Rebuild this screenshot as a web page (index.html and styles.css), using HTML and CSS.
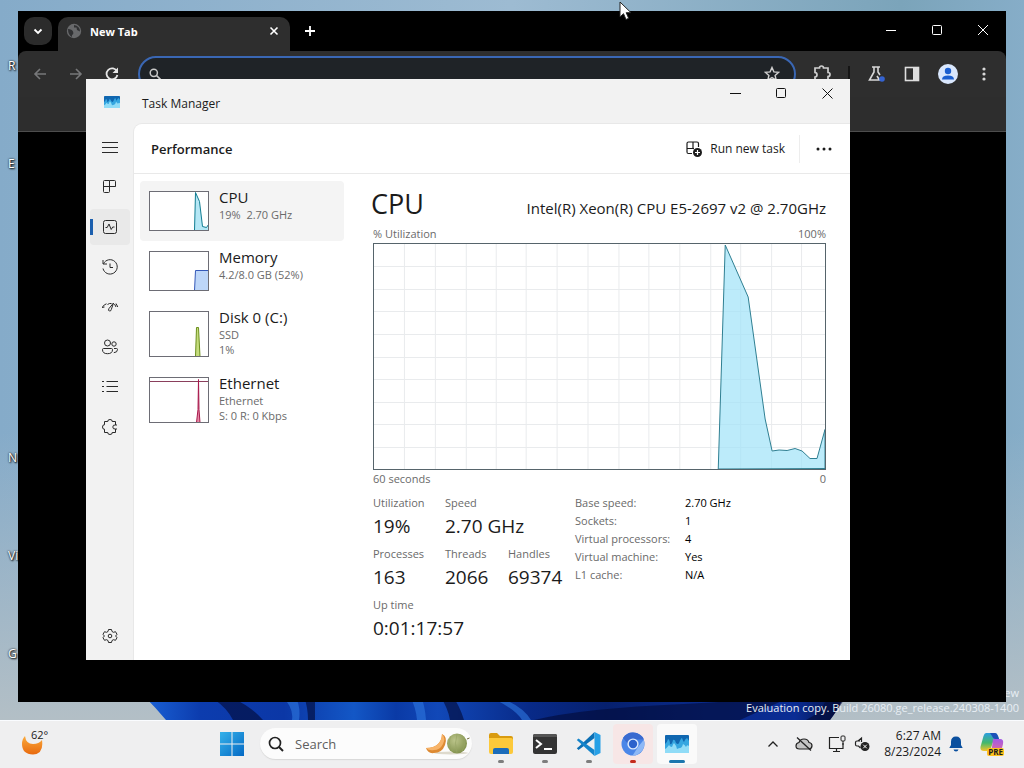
FILE: index.html
```html
<!DOCTYPE html>
<html lang="en">
<head>
    <meta charset="UTF-8">
    <meta name="viewport" content="width=device-width, initial-scale=1.0">
    <title>Desktop - Task Manager</title>
    <link rel="stylesheet" href="styles.css">
</head>
<body>
    <main class="desktop">
        <svg class="wallpaper" viewBox="0 0 1024 24" preserveAspectRatio="none" aria-hidden="true">
            <defs>
                <linearGradient id="bloom" x1="0" x2="1" y1="0" y2="0">
                    <stop offset="0" stop-color="#1a62d6"/>
                    <stop offset=".08" stop-color="#0c3cae"/>
                    <stop offset=".2" stop-color="#0b37a6"/>
                    <stop offset=".3" stop-color="#1357c6"/>
                    <stop offset=".36" stop-color="#0a3aa6"/>
                    <stop offset=".42" stop-color="#1148b8"/>
                    <stop offset=".55" stop-color="#082a88"/>
                    <stop offset=".66" stop-color="#06206e"/>
                    <stop offset=".8" stop-color="#0a2b8c"/>
                    <stop offset=".93" stop-color="#0a2c94"/>
                    <stop offset="1" stop-color="#040f3c"/>
                </linearGradient>
            </defs>
            <path d="M144 0H844Q838 14 830 24H166Q156 12 144 0z" fill="url(#bloom)"/>
            <path d="M282 0q12 12 10 24h7q2-14-4-24zM410 0q6 12 7 24h9q-1-14-5-24zM496 4q20 10 26 20h9Q524 12 506 4z" fill="#2f78e0" opacity=".6"/>
            <path d="M215 4q12 8 18 20h30Q250 10 236 4zM304 0q4 12 4 24h7V0zM440 0q8 12 10 24h14q-5-16-12-24zM534 24q50-12 150-16 60-4 100-4L740 24zM806 24q16-8 20-20h18L830 24z" fill="#030d3c" opacity=".65"/>
        </svg>

        <ul class="shortcuts">
            <li>R</li>
            <li>E</li>
            <li></li>
            <li></li>
            <li>N</li>
            <li>Vis</li>
            <li>G</li>
        </ul>

        <p class="watermark">ew<br>Evaluation copy. Build 26080.ge_release.240308-1400</p>

        <section class="browser" aria-label="Browser">
            <div class="tab-strip">
                <button class="tab-search" aria-label="Search tabs">
                    <svg width="12" height="12" viewBox="0 0 12 12"><path d="M2.5 4.5L6 8l3.500-3.500" fill="none" stroke="#fff" stroke-width="1.800"/></svg>
                </button>
                <div class="tab">
                    <svg width="16" height="16" viewBox="0 0 16 16"><circle cx="8" cy="8" r="7.200" fill="#68696b"/><path d="M2 6q4 0 5 2.500t-1 3.500v2Q2 12 2 6zM8 2v2.500h2.500L11 7l3 1.500Q14 3 8 2z" fill="#303133"/></svg>
                    <span class="tab-title">New Tab</span>
                    <button class="tab-close" aria-label="Close tab">
                        <svg width="10" height="10" viewBox="0 0 10 10"><path d="M1.500 1.500l7 7M8.500 1.500l-7 7" stroke="#fff" stroke-width="1.600"/></svg>
                    </button>
                </div>
                <button class="new-tab" aria-label="New tab">
                    <svg width="12" height="12" viewBox="0 0 12 12"><path d="M6 1v10M1 6h10" stroke="#fff" stroke-width="1.800"/></svg>
                </button>
                <div class="caption-buttons">
                    <button aria-label="Minimize"><svg width="10" height="10" viewBox="0 0 10 10"><path d="M0 5.500h10" stroke="#fff"/></svg></button>
                    <button aria-label="Maximize"><svg width="10" height="10" viewBox="0 0 10 10"><rect x=".5" y=".5" width="9" height="9" rx="1" fill="none" stroke="#fff"/></svg></button>
                    <button aria-label="Close"><svg width="10" height="10" viewBox="0 0 10 10"><path d="M0 0l10 10M10 0L0 10" stroke="#fff"/></svg></button>
                </div>
            </div>
            <div class="toolbar">
                <button aria-label="Back"><svg width="16" height="16" viewBox="0 0 16 16"><path d="M14 8H3M8 3L3 8l5 5" fill="none" stroke="#77787a" stroke-width="1.600"/></svg></button>
                <button aria-label="Forward"><svg width="16" height="16" viewBox="0 0 16 16"><path d="M2 8h11M8 3l5 5-5 5" fill="none" stroke="#77787a" stroke-width="1.600"/></svg></button>
                <button aria-label="Reload"><svg width="16" height="16" viewBox="0 0 16 16"><path d="M13 5.500A5.500 5.500 0 1 0 13.400 9" fill="none" stroke="#e6e6e6" stroke-width="1.800"/><path d="M14 1.500V7H8.500z" fill="#e6e6e6"/></svg></button>
                <div class="omnibox">
                    <svg width="12" height="12" viewBox="0 0 12 12"><circle cx="4.800" cy="4.800" r="3.600" fill="none" stroke="#c8c8c8" stroke-width="1.500"/><path d="M7.500 7.500l4 4" stroke="#c8c8c8" stroke-width="1.700"/></svg>
                    <input type="text" aria-label="Address and search bar">
                    <button aria-label="Bookmark this tab"><svg width="16" height="16" viewBox="0 0 16 16"><path d="M8 1.500l1.900 4.400 4.800.4-3.600 3.100 1.100 4.700L8 11.600l-4.200 2.500 1.100-4.700L1.300 6.300l4.800-.4z" fill="none" stroke="#d0d0d0" stroke-width="1.400"/></svg></button>
                </div>
                <button aria-label="Extensions"><svg width="18" height="18" viewBox="0 0 18 18"><path d="M2 3h4.500q0-2 2-2t2 2H15v4.500q2 0 2 2t-2 2V16H2v-4q2 0 2-2.200T2 7.500z" fill="none" stroke="#d0d0d0" stroke-width="1.700"/></svg></button>
                <span class="toolbar-divider"></span>
                <button aria-label="Labs"><svg width="18" height="18" viewBox="0 0 18 18"><path d="M5 2h8M7 2v5L2.500 15h10L10 11M11 2v5l2 3" fill="none" stroke="#d8d8d8" stroke-width="1.600"/><circle cx="15" cy="14" r="2.800" fill="#3563d0"/></svg></button>
                <button aria-label="Side panel"><svg width="16" height="16" viewBox="0 0 16 16"><rect x="1.500" y="1.500" width="13" height="13" fill="none" stroke="#dedede" stroke-width="1.600"/><path d="M9 1h6v14H9z" fill="#dedede"/></svg></button>
                <button aria-label="Profile"><svg width="20" height="20" viewBox="0 0 20 20"><circle cx="10" cy="10" r="10" fill="#d9e7fd"/><circle cx="10" cy="7" r="3.200" fill="#1b5fd0"/><path d="M4 15.500q0-4 6-4t6 4z" fill="#1b5fd0"/></svg></button>
                <button aria-label="Menu"><svg width="16" height="16" viewBox="0 0 16 16" fill="#d8d8d8"><circle cx="8" cy="3" r="1.600"/><circle cx="8" cy="8" r="1.600"/><circle cx="8" cy="13" r="1.600"/></svg></button>
            </div>
            <div class="bookmarks"></div>
        </section>

        <section class="task-manager" aria-label="Task Manager">
            <header class="titlebar">
                <svg class="app-icon" width="16" height="12" viewBox="0 0 24 18"><use href="#tm-icon"/></svg>
                <span class="app-title">Task Manager</span>
                <div class="caption-buttons">
                    <button aria-label="Minimize"><svg width="11" height="11" viewBox="0 0 11 11"><path d="M0 5.500h11" stroke="#111"/></svg></button>
                    <button aria-label="Maximize"><svg width="11" height="11" viewBox="0 0 11 11"><rect x=".5" y=".5" width="9" height="9" rx="1" fill="none" stroke="#111"/></svg></button>
                    <button aria-label="Close"><svg width="11" height="11" viewBox="0 0 11 11"><path d="M.5.5l10 10M10.500.5l-10 10" stroke="#111"/></svg></button>
                </div>
            </header>

            <nav class="rail" aria-label="Pages">
                <button aria-label="Navigation"><svg width="16" height="16" viewBox="0 0 16 16"><path d="M0 3.500h16M0 8.500h16M0 13.500h16"/></svg></button>
                <button aria-label="Processes"><svg width="16" height="16" viewBox="0 0 16 16"><path d="M7.500 1.500h-5q-1 0-1 1v10q0 1 1 1h4q1 0 1-1zM1.500 7.500h12v-5q0-1-1-1h-5M13.500 6.500q0 1-1 1"/></svg></button>
                <button class="current" aria-label="Performance" aria-current="page"><svg width="16" height="16" viewBox="0 0 16 16"><rect x="1.500" y="1.500" width="13" height="13" rx="2"/><path d="M3.500 8.500h1.700L7 5l2.200 5.500L10.700 8h1.800"/></svg></button>
                <button aria-label="App history"><svg width="18" height="18" viewBox="0 0 18 18"><path d="M2 2v4h4M2.500 5.800A7.200 7.200 0 1 1 2 10.500M9 5.500v4h3"/></svg></button>
                <button aria-label="Startup apps"><svg width="18" height="18" viewBox="0 0 18 18"><path d="M1.500 9Q3 6.500 5.500 5.800M1 9.500L3.500 9M6.500 6.500q2-1.500 4-1M12.500 5L8 10.500q-1.200 2 .3 2.500t2-1.500zM13.500 6l1.500 3M15 5.500L16.800 9"/></svg></button>
                <button aria-label="Users"><svg width="18" height="18" viewBox="0 0 18 18"><circle cx="6.500" cy="5" r="3"/><circle cx="13" cy="6" r="2.200"/><path d="M2.500 10.500h8q1 0 1 1.200 0 4-5 4t-5-4q0-1.200 1-1.200zM13 10.500h2.500q1 0 1 1 0 3-3.700 3.200"/></svg></button>
                <button aria-label="Details"><svg width="16" height="16" viewBox="0 0 16 16"><path d="M4.500 2.500H16M4.500 7.500H16M4.500 12.500H16M0 2.500h2M0 7.500h2M0 12.500h2"/></svg></button>
                <button aria-label="Services"><svg width="18" height="18" viewBox="0 0 18 18"><path d="M3.500 3.500h3.300q-.3-2 2.200-2t2.200 2h3.300v3.500q-2.700-.4-2.700 2t2.700 2v3.500h-3.300q.3 2-2.200 2t-2.200-2H3.500v-3.300q-2 .3-2-2.200t2-2.200zM14.500 7h1.500M14.500 11h1.500"/></svg></button>
                <button class="settings" aria-label="Settings"><svg width="16" height="16" viewBox="0 0 16 16"><path d="M6.500 1.500h3l.5 2 1.500.8 2-.6 1.500 2.600L13.600 8l1.400 1.700-1.500 2.600-2-.6-1.500.8-.5 2h-3l-.5-2-1.500-.8-2 .6L1 9.700 2.400 8 1 6.300l1.500-2.600 2 .6L6 3.500z"/><circle cx="8" cy="8" r="1.800"/></svg></button>
            </nav>

            <div class="page">
                <header class="page-header">
                    <h1>Performance</h1>
                    <button class="run-task">
                        <svg width="16" height="16" viewBox="0 0 16 16"><path d="M6 12.500H2.500q-1.500 0-1.500-1.500V2.500Q1 1 2.500 1H11q1.500 0 1.500 1.500V6M7 1v7M1 7.500h7" fill="none" stroke="#1b1b1b" stroke-width="1.200"/><circle cx="11.500" cy="11.500" r="4.500" fill="#1b1b1b"/><path d="M11.500 9v5M9 11.500h5" stroke="#fff" stroke-width="1.200"/></svg>
                        <span>Run new task</span>
                    </button>
                    <button class="more" aria-label="See more">
                        <svg width="16" height="4" viewBox="0 0 16 4" fill="#1b1b1b"><circle cx="2" cy="2" r="1.500"/><circle cx="8" cy="2" r="1.500"/><circle cx="14" cy="2" r="1.500"/></svg>
                    </button>
                </header>

                <div class="page-body">
                    <ul class="resources">
                        <li class="resource selected">
                            <svg class="thumb" width="60" height="40" viewBox="0 0 60 40"><path d="M45.500 39.500l1-38 4 9 3 25 4 1 2-3v6z" fill="#b5e7f5" stroke="#117d92"/></svg>
                            <div><h3>CPU</h3><p>19%&nbsp; 2.70 GHz</p></div>
                        </li>
                        <li class="resource">
                            <svg class="thumb" width="60" height="40" viewBox="0 0 60 40"><path d="M45.500 39.500l1-20h13v20z" fill="#bdd6f8" stroke="#3559b8"/></svg>
                            <div><h3>Memory</h3><p>4.2/8.0 GB (52%)</p></div>
                        </li>
                        <li class="resource">
                            <svg class="thumb" width="60" height="46" viewBox="0 0 60 46"><path d="M46.500 45.500l1-29h2l1.500 29z" fill="#c5dc7d" stroke="#6b8f1c"/></svg>
                            <div><h3>Disk 0 (C:)</h3><p>SSD</p><p>1%</p></div>
                        </li>
                        <li class="resource">
                            <svg class="thumb" width="60" height="46" viewBox="0 0 60 46"><path d="M0 4.500h60" stroke="#8a3f5c"/><path d="M47.500 45.500l1.500-13 .5-30 .5 30 1 13z" fill="#e58aa5" stroke="#a8184c"/></svg>
                            <div><h3>Ethernet</h3><p>Ethernet</p><p>S: 0 R: 0 Kbps</p></div>
                        </li>
                    </ul>

                    <section class="detail">
                        <div class="detail-title">
                            <h2>CPU</h2>
                            <p>Intel(R) Xeon(R) CPU E5-2697 v2 @ 2.70GHz</p>
                        </div>
                        <div class="axis"><span>% Utilization</span><span>100%</span></div>
                        <div class="graph">
                            <svg viewBox="0 0 452 225" preserveAspectRatio="none" role="img" aria-label="CPU utilization over 60 seconds">
                                <path class="grid-lines" d="M30.500 0v225M61.500 0v225M92.500 0v225M122.500 0v225M152.500 0v225M183.500 0v225M214.500 0v225M245.500 0v225M275.500 0v225M306.500 0v225M337.500 0v225M367.500 0v225M398.500 0v225M428.500 0v225M0 22.500h452M0 45.500h452M0 67.500h452M0 90.500h452M0 113.500h452M0 135.500h452M0 158.500h452M0 180.500h452M0 203.500h452"/>
                                <path class="usage" d="M345 225L352 1l23 52 17 122 7 32 7-1 8 .5 8-2 7 2.500 8 7.500h7l8-29v39z"/>
                            </svg>
                        </div>
                        <div class="axis"><span>60 seconds</span><span>0</span></div>

                        <div class="stats">
                            <div class="figures">
                                <dl>
                                    <div><dt>Utilization</dt><dd>19%</dd></div>
                                    <div><dt>Speed</dt><dd>2.70 GHz</dd></div>
                                </dl>
                                <dl>
                                    <div><dt>Processes</dt><dd>163</dd></div>
                                    <div><dt>Threads</dt><dd>2066</dd></div>
                                    <div><dt>Handles</dt><dd>69374</dd></div>
                                </dl>
                                <dl>
                                    <div><dt>Up time</dt><dd>0:01:17:57</dd></div>
                                </dl>
                            </div>
                            <table class="facts">
                                <tr><th scope="row">Base speed:</th><td>2.70 GHz</td></tr>
                                <tr><th scope="row">Sockets:</th><td>1</td></tr>
                                <tr><th scope="row">Virtual processors:</th><td>4</td></tr>
                                <tr><th scope="row">Virtual machine:</th><td>Yes</td></tr>
                                <tr><th scope="row">L1 cache:</th><td>N/A</td></tr>
                            </table>
                        </div>
                    </section>
                </div>
            </div>
        </section>

        <svg class="pointer" width="13" height="20" viewBox="0 0 13 20"><path d="M1 1v15l3.500-3.300L7 18.500l2.700-1.200L7.200 11.700H12z" fill="#fff" stroke="#222"/></svg>
    </main>

    <footer class="taskbar">
        <button class="weather">
            <svg width="22" height="22" viewBox="0 0 22 22">
                <defs><linearGradient id="moon" x1="0" x2="0" y1="0" y2="1"><stop offset="0" stop-color="#fbab3c"/><stop offset="1" stop-color="#e8690e"/></linearGradient></defs>
                <path d="M4 3q1 8 8 8 6 0 9-4 2 14-9 14.500Q1 21 1 11q0-5 3-8z" fill="url(#moon)"/>
            </svg>
            <span>62°</span>
        </button>

        <div class="apps">
            <button class="app" aria-label="Start">
                <svg width="24" height="24" viewBox="0 0 24 24">
                    <defs><linearGradient id="win" x1="0" x2="1" y1="0" y2="1"><stop offset="0" stop-color="#35b2ea"/><stop offset="1" stop-color="#0569c4"/></linearGradient></defs>
                    <path d="M0 0h11.500v11.500H0zM12.500 0H24v11.500H12.500zM0 12.500h11.500V24H0zM12.500 12.500H24V24H12.500z" fill="url(#win)"/>
                </svg>
            </button>
            <label class="search">
                <svg width="16" height="16" viewBox="0 0 16 16"><circle cx="7" cy="7" r="5.500" fill="none" stroke="#222" stroke-width="1.700"/><path d="M11 11l4 4" stroke="#222" stroke-width="2"/></svg>
                <input type="text" placeholder="Search" aria-label="Search">
                <svg width="44" height="22" viewBox="0 0 44 22">
                    <defs><radialGradient id="melon" cx=".4" cy=".35" r=".7"><stop offset="0" stop-color="#bcc58b"/><stop offset="1" stop-color="#7f8f4b"/></radialGradient></defs>
                    <ellipse cx="25" cy="20" rx="17" ry="1.500" fill="#dedacd"/>
                    <circle cx="31" cy="10.500" r="10" fill="url(#melon)"/>
                    <path d="M25 3q-4 8 2 15M31 1q-3 9 0 19M36 2q5 8 0 16" fill="none" stroke="#98a566" stroke-width=".7"/>
                    <path d="M41 6l2.500-1" stroke="#6f6a3c"/>
                    <path d="M16 1q6 3 3 11t-11 8q-6 1-8-5 8 0 12-4t4-10z" fill="#dd8a33"/>
                    <path d="M16 1q4 4 1 10t-9 6q-5 1-8-2 9 0 13-5 3-4 3-9z" fill="#f8b469"/>
                </svg>
            </label>
            <button class="app running" aria-label="File Explorer">
                <svg width="26" height="24" viewBox="0 0 26 24"><path d="M1 3q0-2 2-2h6l3 3h11q2 0 2 2v4H1z" fill="#d99b10"/><path d="M1 6h22q2 0 2 2v12q0 2-2 2H3q-2 0-2-2z" fill="#fcc93b"/><path d="M5 22v-4q0-2 2-2h12q2 0 2 2v4z" fill="#1b6cba"/></svg>
            </button>
            <button class="app running" aria-label="Terminal">
                <svg width="26" height="22" viewBox="0 0 26 22"><rect x="1" y="1" width="24" height="20" rx="2" fill="#343434"/><path d="M1 4V3q0-2 2-2h20q2 0 2 2v1z" fill="#555"/><path d="M4 7l5 4-5 4" fill="none" stroke="#fff" stroke-width="2"/><path d="M12 16h8" stroke="#fff" stroke-width="2"/></svg>
            </button>
            <button class="app running" aria-label="Visual Studio Code">
                <svg width="26" height="26" viewBox="0 0 26 26"><path d="M18.500 1L3 15.500.8 17.300 2.500 19 18.500 7z" fill="#0b6fb4"/><path d="M2.500 7.500L.8 9 3 11l15.500 14v-6z" fill="#1484cb"/><path d="M18.500 1l6 3v18l-6 3z" fill="#27a0e6"/></svg>
            </button>
            <button class="app running chromium" aria-label="Chromium">
                <svg width="24" height="24" viewBox="0 0 24 24"><circle cx="12" cy="12" r="11.500" fill="#4b86e8"/><path d="M2 6Q6 0 12 .5q8 .3 11 7H12Q8 7.500 7 12z" fill="#3a6ad0"/><path d="M22.600 8q3 9-6 14.500-2 1-5 1L17 15z" fill="#8db8f6"/><circle cx="12" cy="12" r="5.600" fill="#dce9fc"/><circle cx="12" cy="12" r="4.200" fill="#2c62cc"/></svg>
            </button>
            <button class="app running active" aria-label="Task Manager">
                <svg width="24" height="18" viewBox="0 0 24 18">
                    <g id="tm-icon">
                        <rect width="24" height="18" rx="1" fill="#1067b0"/>
                        <path d="M0 9q2-1 3-5 2 1 2 5 2 1 3-4 2-1 3 3 2 2 3 0 2-5 3-5 1 3 2 4 1-3 3-4 1 1 2 3v12H0z" fill="#35a6e0"/>
                        <path d="M0 14q2-1 4-4 1 2 3 2 1-3 2-4 2 2 3 6 2-1 3-1 2 0 3-4 2 1 3 3 1-3 3-1v7H0z" fill="#90dcf7"/>
                    </g>
                </svg>
            </button>
        </div>

        <div class="tray">
            <button class="overflow" aria-label="Show hidden icons"><svg width="12" height="8" viewBox="0 0 12 8"><path d="M1.500 6.500L6 2l4.500 4.500" fill="none" stroke="#222" stroke-width="1.300"/></svg></button>
            <button class="cloud" aria-label="OneDrive"><svg width="18" height="16" viewBox="0 0 18 16"><path d="M4.500 13q-3.500 0-3.500-3t3-3.500Q5 3 9 3t5 3.500q3 .3 3 3.300T14 13z" fill="#c4c4c4" stroke="#222" stroke-width="1.200"/><path d="M2 1.500l14 13" stroke="#222" stroke-width="1.300"/></svg></button>
            <button class="sound" aria-label="Network and volume">
                <svg width="18" height="18" viewBox="0 0 18 18"><path d="M11 2.500H1.500v11H15V8M5 16.500h7M8.500 13.500v3" fill="none" stroke="#222" stroke-width="1.200"/><rect x="13" y="1" width="4" height="5" rx="1" fill="none" stroke="#222"/><path d="M15 6v4" stroke="#222"/></svg>
                <svg width="16" height="16" viewBox="0 0 16 16"><path d="M6 5H3Q1.500 5 1.500 6.500v2Q1.500 10 3 10h1.500l2 2M4 5l3.500-3V6" fill="none" stroke="#222" stroke-width="1.200"/><circle cx="11" cy="10.500" r="4.500" fill="#222"/><path d="M9.200 8.700l3.600 3.600M12.800 8.700l-3.600 3.600" stroke="#fff"/></svg>
            </button>
            <button class="clock"><time datetime="2024-08-23T06:27">6:27 AM<br>8/23/2024</time></button>
            <button class="bell" aria-label="Notifications"><svg width="14" height="16" viewBox="0 0 14 16"><path d="M7 .5q5 0 5 5.500v3l1.700 3H.3L2 9V6Q2 .5 7 .5zM4.500 13.500h5Q9 15.500 7 15.500t-2.500-2z" fill="#0a4f9e"/></svg></button>
            <button class="copilot" aria-label="Copilot">
                <svg width="24" height="24" viewBox="0 0 24 24">
                    <defs>
                        <linearGradient id="pilot" x1="0" x2="0" y1="0" y2="1"><stop offset="0" stop-color="#2a9de0"/><stop offset=".55" stop-color="#45b86b"/><stop offset="1" stop-color="#f3c52b"/></linearGradient>
                        <linearGradient id="pilot-right" x1="0" x2="0" y1="0" y2="1"><stop offset="0" stop-color="#a259e6"/><stop offset="1" stop-color="#ee6f8d"/></linearGradient>
                    </defs>
                    <path d="M6 1h9q2 0 3 3l1 3h-5l-4 12H4q-5 0-3-6L3.500 4Q4.500 1 6 1z" fill="url(#pilot)"/>
                    <path d="M13 7h7q4 0 3 5l-2 8q-1 3-4 3H9q2-1 2.500-4z" fill="url(#pilot-right)"/>
                    <path d="M10 1h5q2 0 3 3l1 3h-4q-2 0-3-3z" fill="#1c50b8"/>
                </svg>
                <span class="badge">PRE</span>
            </button>
        </div>
    </footer>
</body>
</html>
```

FILE: styles.css
```css
* {
    box-sizing: border-box;
}

body {
    margin: 0;
    height: 100vh;
    display: flex;
    flex-direction: column;
    overflow: hidden;
    font-family: "Open Sans", "Noto Sans", sans-serif;
    font-size: 12px;
    color: #1b1b1b;
}

h1, h2, h3, p, ul, dl, dd {
    margin: 0;
    padding: 0;
    font-weight: 400;
}

ul {
    list-style: none;
}

button {
    display: flex;
    align-items: center;
    justify-content: center;
    padding: 0;
    border: none;
    background: none;
    font: inherit;
    color: inherit;
}

input {
    min-width: 0;
    border: none;
    outline: none;
    background: none;
    font: inherit;
    color: inherit;
}

svg {
    flex: none;
}

/* Desktop */
.desktop {
    position: relative;
    flex: 1;
    overflow: hidden;
    background: linear-gradient(180deg, rgba(255,255,255,0) 60%, #b3bfc6 100%), linear-gradient(90deg, #85abc9, #9dbbd2 50%, #7ba4ba 88%, #86adc8);
}

.wallpaper {
    position: absolute;
    left: 0;
    bottom: 0;
    width: 100%;
    height: 24px;
}

.shortcuts {
    position: absolute;
    top: 56px;
    left: 0;
    width: 18px;
}

.shortcuts li {
    height: 98px;
    padding-left: 8px;
    line-height: 20px;
    color: #fff;
    text-shadow: 0 0 2px #000, 1px 1px 2px #000;
}

.watermark {
    position: absolute;
    right: 5px;
    bottom: 5px;
    line-height: 15px;
    font-size: 11px;
    text-align: right;
    color: #e8eef4;
}

.pointer {
    position: absolute;
    top: 1px;
    left: 619px;
}

.caption-buttons {
    display: flex;
    margin-left: auto;
}

.caption-buttons button {
    width: 46px;
    height: 28px;
}

/* Browser window */
.browser {
    position: absolute;
    top: 11px;
    right: 18px;
    bottom: 18px;
    left: 18px;
    background: #000;
    color: #fff;
}

.tab-strip {
    display: flex;
    height: 40px;
    padding-left: 6px;
}

.tab-search {
    width: 28px;
    height: 28px;
    margin: 6px 6px 0 0;
    border-radius: 10px;
    background: #2b2b2b;
}

.tab {
    display: flex;
    align-items: center;
    gap: 8px;
    width: 232px;
    margin-top: 6px;
    padding: 0 8px;
    padding-bottom: 6px;
    border-radius: 10px 10px 0 0;
    background: #2e2e2e;
}

.tab-title {
    flex: 1;
    font-size: 11px;
    font-weight: 700;
}

.tab-close {
    width: 16px;
    height: 16px;
}

.new-tab {
    width: 28px;
    height: 28px;
    margin: 6px;
}

.tab-strip .caption-buttons button {
    height: 38px;
}

.toolbar {
    display: flex;
    align-items: center;
    height: 46px;
    padding: 0 4px;
    border-radius: 8px 8px 0 0;
    background: #2e2e2e;
}

.toolbar button {
    width: 36px;
    height: 28px;
}

.omnibox {
    flex: 1;
    display: flex;
    align-items: center;
    height: 36px;
    margin: 0 8px;
    padding: 0 4px 0 9px;
    border: 2px solid #3a67b4;
    border-radius: 18px;
    background: #1f2327;
}

.omnibox input {
    flex: 1;
}

.toolbar-divider {
    width: 2px;
    height: 16px;
    margin: 0 8px;
    background: #151515;
}

.bookmarks {
    height: 35px;
    border-bottom: 1px solid #4d4d4d;
    background: #2d2d2d;
}

/* Task Manager window */
.task-manager {
    position: absolute;
    top: 79px;
    right: 174px;
    bottom: 60px;
    left: 86px;
    display: grid;
    grid-template: 45px minmax(0, 1fr) / 48px minmax(0, 1fr);
    background: #f2f2f2;
}

.titlebar {
    grid-column: 1 / 3;
    display: flex;
    align-items: center;
    padding-left: 18px;
}

.app-title {
    margin-left: 22px;
    padding-top: 3px;
}

.titlebar .caption-buttons {
    align-self: flex-start;
}

.rail {
    display: flex;
    flex-direction: column;
    align-items: center;
    padding: 5px 0 6px;
}

.rail button {
    width: 40px;
    height: 36px;
    margin-bottom: 4px;
    border-radius: 4px;
}

.rail svg {
    fill: none;
    stroke: #2a2a2a;
    stroke-width: 1;
}

.rail .current {
    background: linear-gradient(#1b5fae, #1b5fae) left center / 3px 16px no-repeat, #e9e9e9;
}

.rail .settings {
    margin-top: auto;
    margin-bottom: 0;
}

.page {
    display: flex;
    flex-direction: column;
    border-radius: 8px 0 0 0;
    box-shadow: 0 0 0 1px #e8e8e8;
    clip-path: inset(-1px 0 0 -1px);
    background: #fff;
}

.page-header {
    display: flex;
    align-items: center;
    height: 50px;
    padding: 0 10px 0 17px;
    border-bottom: 1px solid #e9e9e9;
}

.page-header h1 {
    flex: 1;
    font-size: 13px;
    font-weight: 600;
}

.run-task {
    gap: 8px;
    height: 28px;
    padding-right: 14px;
    border-right: 1px solid #ededed;
}

.more {
    width: 32px;
    height: 32px;
    margin-left: 8px;
}

.page-body {
    flex: 1;
    display: flex;
    min-height: 0;
    padding: 7px 24px 13px 6px;
}

.resources {
    flex: none;
    width: 204px;
    margin-right: 29px;
}

.resource {
    display: flex;
    gap: 10px;
    padding: 6px 9px 3px;
    border-radius: 4px;
}

.resource.selected {
    background: #f4f4f4;
}

.thumb {
    margin: 4px 0 7px;
    outline: 1px solid #6d6d75;
    outline-offset: -1px;
    background: #fff;
}

.resource h3 {
    font-size: 15px;
    line-height: 20px;
}

.resource p {
    font-size: 11px;
    line-height: 15px;
    color: #6a6a6a;
}

/* CPU detail */
.detail {
    flex: 1;
    display: flex;
    flex-direction: column;
    min-width: 0;
}

.detail-title {
    display: flex;
    align-items: baseline;
    justify-content: space-between;
    height: 44px;
    white-space: nowrap;
}

.detail-title h2 {
    font-size: 27px;
    line-height: 46px;
    margin-left: -2px;
}

.detail-title p {
    font-size: 15px;
}

.axis {
    display: flex;
    justify-content: space-between;
    line-height: 18px;
    font-size: 11px;
    color: #6a6a6a;
}

.graph {
    flex: 1;
    min-height: 0;
    border: 1px solid #56646b;
}

.graph svg {
    display: block;
    width: 100%;
    height: 100%;
}

.grid-lines {
    fill: none;
    stroke: #e9ebed;
    vector-effect: non-scaling-stroke;
}

.usage {
    fill: rgba(160, 226, 248, 0.7);
    stroke: #2f7f92;
    vector-effect: non-scaling-stroke;
}

.stats {
    display: flex;
    margin-top: 6px;
}

.figures {
    flex: none;
    width: 202px;
}

.figures dl {
    display: flex;
    height: 51px;
}

.figures dl div {
    min-width: 63px;
}

.figures dl div:first-child {
    min-width: 72px;
}

.figures dt {
    font-size: 11px;
    line-height: 18px;
    color: #6a6a6a;
}

.figures dd {
    font-size: 19px;
    line-height: 28px;
}

.facts {
    align-self: flex-start;
    border-collapse: collapse;
    font-size: 11px;
    line-height: 18px;
}

.facts th {
    width: 110px;
    padding: 0;
    font-weight: 400;
    text-align: left;
    color: #6a6a6a;
}

.facts td {
    padding: 0;
    color: #000;
}

/* Taskbar */
.taskbar {
    flex: none;
    display: flex;
    height: 48px;
    padding-bottom: 2px;
    border-top: 1px solid #fafcff;
    background: #efeff0;
}

.weather {
    justify-content: flex-start;
    width: 210px;
    padding-left: 21px;
    font-size: 11px;
}

.weather span {
    margin: -18px 0 0 -12px;
}

.apps {
    display: flex;
    align-items: center;
}

.app {
    position: relative;
    width: 40px;
    height: 40px;
    margin: 0 2px;
    border-radius: 4px;
}

.running::after {
    content: "";
    position: absolute;
    bottom: 1px;
    width: 6px;
    height: 3px;
    border-radius: 2px;
    background: #7d7d7d;
}

.chromium {
    background: #f7e6e6;
}

.chromium::after {
    background: #c42b1c;
}

.active {
    background: #fafafa;
}

.active::after {
    width: 16px;
    background: #1b76ae;
}

.search {
    display: flex;
    align-items: center;
    gap: 9px;
    width: 212px;
    height: 31px;
    margin: 0 7px 0 6px;
    padding: 0 2px 0 8px;
    border-radius: 16px;
    box-shadow: 0 1px 1px #d8d8d8;
    background: #fcfcfc;
}

.search input {
    flex: 1;
    font-size: 13px;
}

.search input::placeholder {
    color: #5e5e5e;
    opacity: 1;
}

.tray {
    display: flex;
    align-items: center;
    margin-left: auto;
    padding-right: 20px;
}

.overflow {
    margin-right: 16px;
}

.cloud {
    margin-right: 15px;
}

.sound {
    gap: 8px;
    margin-right: 14px;
}

.clock {
    font-size: 12px;
    line-height: 16px;
    text-align: right;
}

.bell {
    margin: 0 17px 0 8px;
}

.copilot {
    position: relative;
}

.badge {
    position: absolute;
    right: 0;
    bottom: 0;
    padding: 0 1px;
    border-radius: 2px;
    background: #ffc21f;
    font-size: 8px;
    font-weight: 700;
    line-height: 8px;
}
```
